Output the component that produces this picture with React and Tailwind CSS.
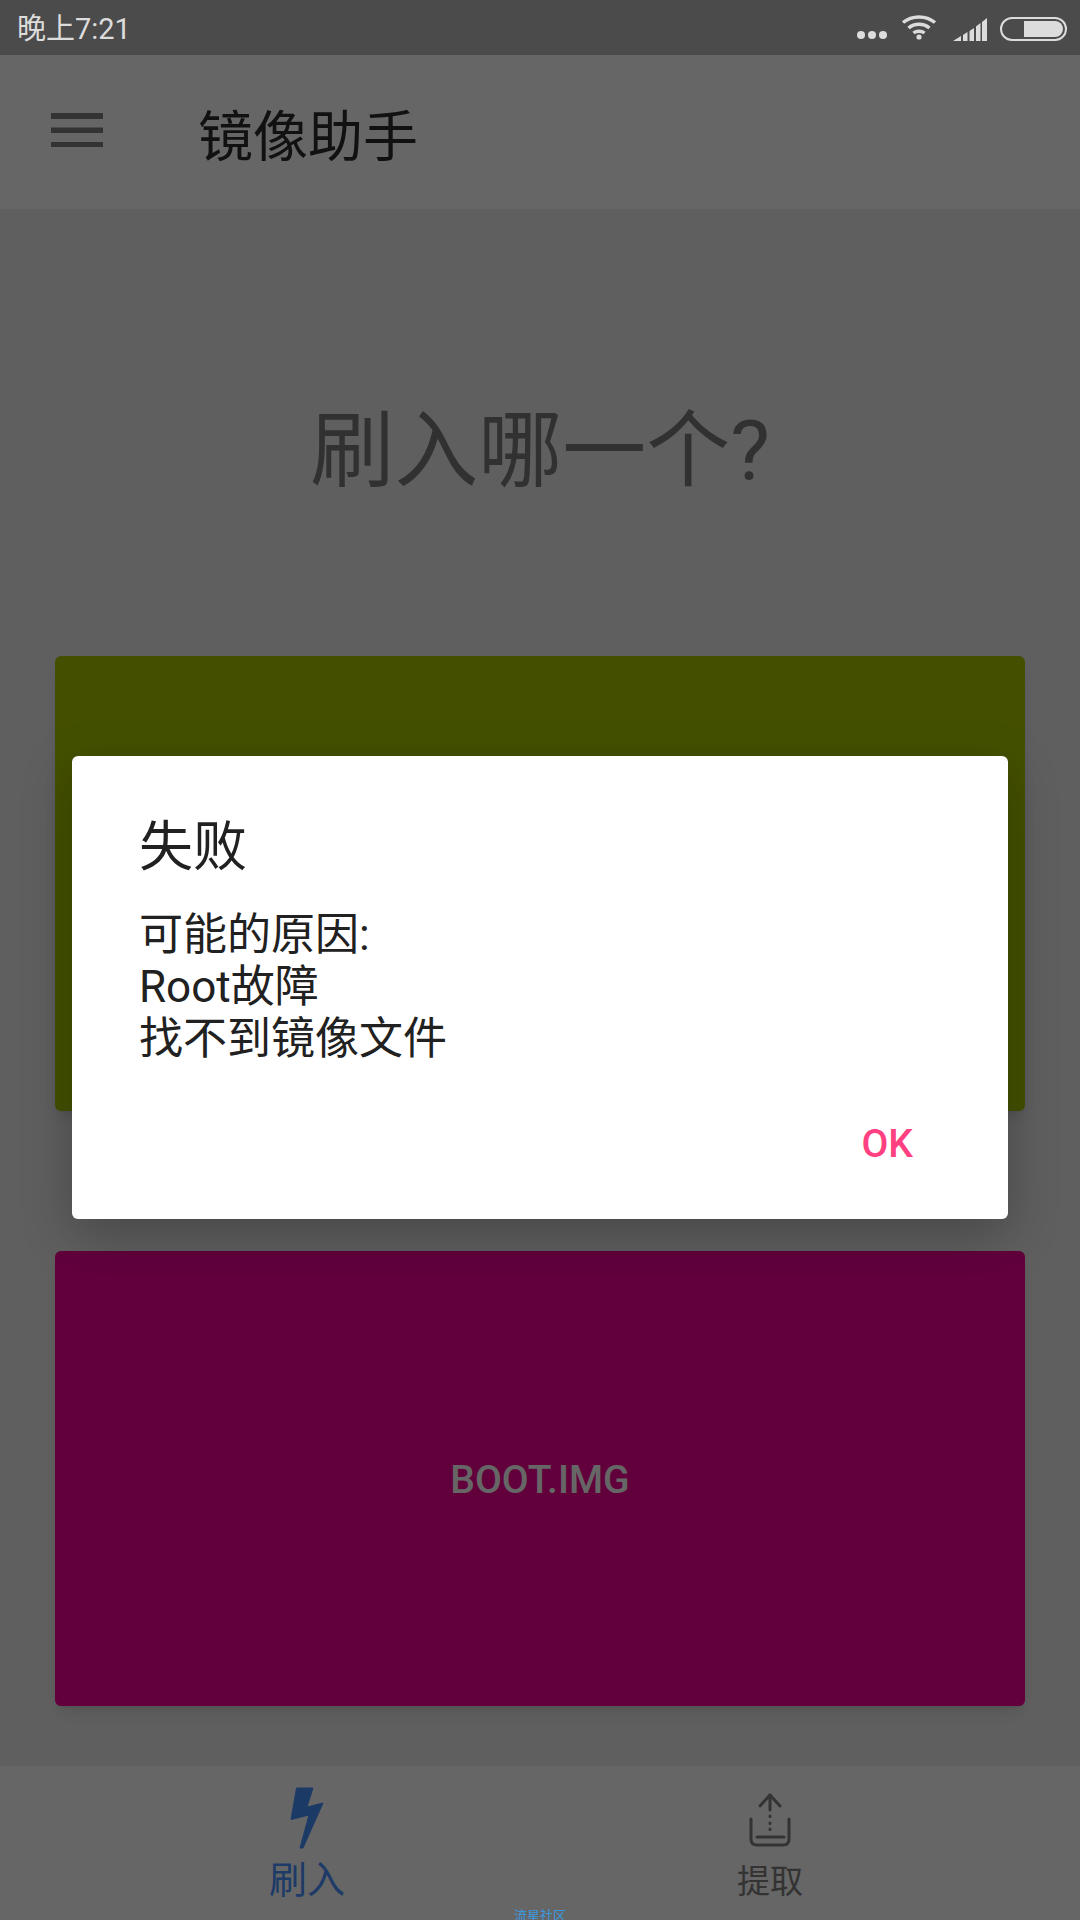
function WifiIcon() {
  return (
    <svg width="36" height="26" viewBox="0 0 36 26" fill="none" stroke="#dcdcdc" strokeWidth="3.5">
      <path d="M2 8.5C11 1 25 1 34 8.5" />
      <path d="M7.5 14C13.5 9 22.5 9 28.5 14" />
      <path d="M12.5 19C15.5 16.5 20.5 16.5 23.5 19" />
      <circle cx="18" cy="23" r="2.6" fill="#dcdcdc" stroke="none" />
    </svg>
  )
}

function SignalIcon() {
  return (
    <svg width="34" height="23" viewBox="0 0 34 23" fill="#dcdcdc">
      <path d="M0 23L8 18V23Z" />
      <path d="M10 17L14.5 14V23H10Z" />
      <path d="M16.5 13L21 10V23H16.5Z" />
      <path d="M23 8.5L27.5 5V23H23Z" />
      <path d="M29 4L34 0V23H29Z" />
    </svg>
  )
}

function BatteryIcon() {
  return (
    <div className="flex h-[24px] w-[67px] items-center justify-end rounded-full border-2 border-[#dcdcdc] p-[2px]">
      <div className="h-[16px] w-[39px] rounded-r-full bg-[#dcdcdc]" />
    </div>
  )
}

function MenuIcon() {
  return (
    <svg width="52" height="34" viewBox="0 0 52 34" fill="#808080">
      <rect y="0" width="52" height="6" />
      <rect y="14.5" width="52" height="5.5" />
      <rect y="29" width="52" height="5" />
    </svg>
  )
}

function BoltIcon() {
  return (
    <svg width="34" height="62" viewBox="0 0 34 62" fill="#4692ff" stroke="#4692ff" strokeWidth="1" strokeLinejoin="round">
      <path d="M6.5 1H23L17 20L33 16L13 61H10L19 28L1 32.5Z" />
    </svg>
  )
}

function ExtractIcon() {
  return (
    <svg width="42" height="54" viewBox="0 0 42 54" fill="none" stroke="#808080" strokeWidth="3" strokeLinecap="round" strokeLinejoin="round">
      <path d="M21 2V17" />
      <path d="M11 13L21 2L31 13" />
      <path d="M21 23V23.5M21 30V30.5M21 36V36.5" />
      <path d="M2 26V46C2 50 4 52 8 52H34C38 52 40 50 40 46V26" />
      <path d="M8 44H35" />
    </svg>
  )
}

export default function App() {
  return (
    <div className="relative flex h-[1920px] w-[1080px] flex-col overflow-hidden bg-[#eeeeee] font-['Roboto','Noto_Sans_CJK_SC',sans-serif]">
      <div className="relative z-20 flex h-[55px] shrink-0 items-center justify-between bg-[#4b4b4b] pt-[3px] pl-[17px] pr-[13px] text-[#dcdcdc]">
        <span className="text-[29px] leading-none">晚上7:21</span>
        <div className="flex items-center">
          <div className="mt-[12px] mr-[14px] flex gap-[3px]">
            <span className="h-[8px] w-[8px] rounded-full bg-[#dcdcdc]" />
            <span className="h-[8px] w-[8px] rounded-full bg-[#dcdcdc]" />
            <span className="h-[8px] w-[8px] rounded-full bg-[#dcdcdc]" />
          </div>
          <div className="mr-[16px] mb-[4px]"><WifiIcon /></div>
          <div className="mr-[13px]"><SignalIcon /></div>
          <BatteryIcon />
        </div>
      </div>

      <div className="flex h-[154px] shrink-0 items-center bg-white">
        <div className="mb-[4px] ml-[51px]"><MenuIcon /></div>
        <h1 className="mt-[10px] ml-[95px] text-[55px] font-normal text-[#2c2c2c]">镜像助手</h1>
      </div>

      <div className="flex flex-1 flex-col px-[55px]">
        <h2 className="mt-[193px] text-center text-[84px] leading-[100px] font-normal text-[#7c7c7c]">刷入哪一个?</h2>
        <div className="mt-[154px] h-[455px] rounded-[6px] bg-[#aac800] shadow-lg" />
        <div className="mt-[140px] flex h-[455px] items-center justify-center rounded-[6px] bg-[#f50096] pt-[4px] text-[39px] font-medium text-white shadow-lg">
          BOOT.IMG
        </div>
      </div>

      <div className="flex h-[154px] shrink-0 gap-[263px] bg-white pl-[207px]">
        <div className="flex w-[200px] flex-col items-center pt-[21px]">
          <BoltIcon />
          <span className="mt-[8px] text-[38px] leading-[46px] text-[#4a94ff]">刷入</span>
        </div>
        <div className="flex w-[200px] flex-col items-center pt-[27px] text-[#808080]">
          <ExtractIcon />
          <span className="mt-[12px] text-[33px] leading-[46px]">提取</span>
        </div>
      </div>

      {/* dim layer under the dialog */}
      <div className="absolute inset-x-0 top-[55px] bottom-0 z-10 bg-black/60" />

      <div className="absolute top-[756px] left-[72px] z-20 flex h-[463px] w-[936px] flex-col rounded-[6px] bg-white pt-[60px] pl-[67px] shadow-[0_16px_50px_rgba(0,0,0,0.25)]">
        <h3 className="text-[54px] leading-[64px] font-normal text-[#212121]">失败</h3>
        <p className="mt-[29px] text-[44px] leading-[52px] text-[#212121]">
          可能的原因:<br />Root故障<br />找不到镜像文件
        </p>
        <span className="absolute right-[95px] bottom-[55px] text-[39px] leading-none font-medium text-[#ff4081]">OK</span>
      </div>

      <span className="absolute bottom-[-4px] left-[514px] z-20 text-[13px] leading-[17px] text-[#3a9ae0]">流星社区</span>
    </div>
  )
}
